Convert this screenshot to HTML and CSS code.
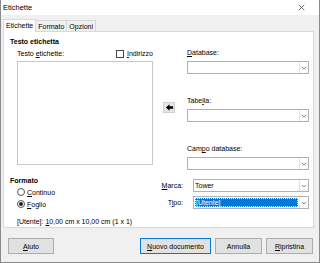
FILE: index.html
```html
<!DOCTYPE html>
<html lang="it">

<head>
    <meta charset="UTF-8">
    <title>Etichette</title>
    <link rel="stylesheet" href="styles.css">
</head>

<body>
    <div class="window">
        <div class="titlebar">
            <span>Etichette</span>
            <svg class="close" viewBox="0 0 10 10">
                <path d="M1,1 L9,9 M9,1 L1,9" stroke="#333" stroke-width="1" fill="none"></path>
            </svg>
        </div>
        <div class="content">
            <div class="tabs">
                <div class="tab tab-selected">Etichette</div>
                <div class="tab">Formato</div>
                <div class="tab">Opzioni</div>
            </div>
            <div class="panel">
                <div class="top">
                    <div class="text-col">
                        <div class="heading">Testo etichetta</div>
                        <div class="label-row">
                            <span>Testo <u>e</u>tichette:</span>
                            <span class="check"><span class="checkbox"></span><u>I</u>ndirizzo</span>
                        </div>
                        <div class="textarea"></div>
                    </div>
                    <div class="arrow-col">
                        <div class="arrow-btn">
                            <svg viewBox="0 0 10 10">
                                <path d="M1,5 L5,1.5 L5,3.7 L9,3.7 L9,6.3 L5,6.3 L5,8.5 Z" fill="#000"></path>
                            </svg>
                        </div>
                    </div>
                    <div class="db-col">
                        <div class="field first">
                            <div class="label"><u>D</u>atabase:</div>
                            <div class="combo"><span class="combo-text"></span><span class="combo-btn"><svg viewBox="0 0 8 8"><path d="M2,3 L4,5 L6,3" stroke="#666" stroke-width="0.8" fill="none"></path></svg></span></div>
                        </div>
                        <div class="field">
                            <div class="label">Tabe<u>l</u>la:</div>
                            <div class="combo"><span class="combo-text"></span><span class="combo-btn"><svg viewBox="0 0 8 8"><path d="M2,3 L4,5 L6,3" stroke="#666" stroke-width="0.8" fill="none"></path></svg></span></div>
                        </div>
                        <div class="field">
                            <div class="label">Cam<u>p</u>o database:</div>
                            <div class="combo"><span class="combo-text"></span><span class="combo-btn"><svg viewBox="0 0 8 8"><path d="M2,3 L4,5 L6,3" stroke="#666" stroke-width="0.8" fill="none"></path></svg></span></div>
                        </div>
                    </div>
                </div>
                <div class="bottom">
                    <div class="format-col">
                        <div class="heading">Formato</div>
                        <div class="radio-row"><span class="radio"></span><u>C</u>ontinuo</div>
                        <div class="radio-row"><span class="radio radio-on"></span><u>F</u>oglio</div>
                        <div class="info">[Utente]: <u>1</u>0,00 cm x 10,00 cm (1 x 1)</div>
                    </div>
                    <div class="brand-col">
                        <div class="brand-row">
                            <span class="brand-label"><u>M</u>arca:</span>
                            <div class="combo"><span class="combo-text">Tower</span><span class="combo-btn"><svg viewBox="0 0 8 8"><path d="M2,3 L4,5 L6,3" stroke="#666" stroke-width="0.8" fill="none"></path></svg></span></div>
                        </div>
                        <div class="brand-row">
                            <span class="brand-label">T<u>i</u>po:</span>
                            <div class="combo combo-focus"><span class="combo-text"><span class="sel">[Utente]</span></span><span class="combo-btn"><svg viewBox="0 0 8 8"><path d="M2,3 L4,5 L6,3" stroke="#666" stroke-width="0.8" fill="none"></path></svg></span></div>
                        </div>
                    </div>
                </div>
            </div>
            <div class="buttons">
                <div class="btn btn-help"><u>A</u>iuto</div>
                <div class="spacer"></div>
                <div class="btn btn-default"><u>N</u>uovo documento</div>
                <div class="btn">Annulla</div>
                <div class="btn"><u>R</u>ipristina</div>
            </div>
        </div>
    </div>
</body>

</html>
```

FILE: styles.css
```css
* {
    box-sizing: border-box;
    font-family: "Liberation Sans", Arial, sans-serif;
}

html,
body {
    width: 320px;
    height: 263px;
    margin: 0;
    padding: 0;
    overflow: hidden;
    background: #f0f0f0;
}

u {
    text-decoration: underline;
    text-underline-offset: 1px;
}

.window {
    width: 320px;
    height: 263px;
    border: 1px solid #8a8a8a;
    border-top: none;
    display: flex;
    flex-direction: column;
    font-size: 7px;
    color: #000;
}

.titlebar {
    height: 15px;
    flex: none;
    background: #fff;
    display: flex;
    align-items: center;
    justify-content: space-between;
    padding: 0 14px 0 2px;
    font-size: 7.5px;
}

.close {
    width: 7px;
    height: 7px;
}

.content {
    flex: 1;
    display: flex;
    flex-direction: column;
    padding: 4px 5px 0 2px;
}

.tabs {
    display: flex;
    height: 12px;
    position: relative;
    z-index: 1;
}

.tab {
    padding: 0 2px;
    line-height: 11px;
    border: 1px solid #d9d9d9;
    border-bottom: none;
    border-left: none;
    background: #f0f0f0;
    margin-top: 1px;
}

.tab:first-child {
    border-left: 1px solid #d9d9d9;
}

.tab-selected {
    background: #fff;
    margin-top: 0;
    height: 13px;
    line-height: 12px;
}

.panel {
    height: 197px;
    background: #fff;
    border: 1px solid #d9d9d9;
    padding: 5px 4px 0 6px;
    display: flex;
    flex-direction: column;
}

.heading {
    font-weight: bold;
    line-height: 10px;
    height: 10px;
}

.top {
    display: flex;
}

.text-col {
    width: 143px;
}

.label-row {
    display: flex;
    justify-content: space-between;
    align-items: center;
    height: 11px;
    margin-top: 1px;
    padding-left: 7px;
}

.check {
    display: flex;
    align-items: center;
}

.checkbox {
    width: 8px;
    height: 8px;
    border: 1px solid #444;
    background: #fff;
    margin-right: 3px;
}

.textarea {
    margin: 2px 0 0 7px;
    width: 136px;
    height: 104px;
    border: 1px solid #c8c8c8;
}

.arrow-col {
    width: 34px;
    padding: 65px 0 0 10px;
}

.arrow-btn {
    width: 12px;
    height: 11px;
    background: #e6e6e6;
    border: 1px solid #d0d0d0;
    display: flex;
    align-items: center;
    justify-content: center;
}

.arrow-btn svg {
    width: 9px;
    height: 9px;
}

.db-col {
    width: 122px;
}

.field {
    margin-top: 22px;
}

.field.first {
    margin-top: 11px;
}

.label {
    line-height: 10px;
    height: 10px;
}

.combo {
    display: flex;
    height: 13px;
    margin-top: 3px;
    border: 1px solid #b0b0b0;
    background: #fff;
}

.combo-text {
    flex: 1;
    padding: 1px 1px;
    line-height: 9px;
}

.combo-btn {
    width: 9px;
    border-left: 1px solid #e3e3e3;
    display: flex;
    align-items: center;
    justify-content: center;
}

.combo-btn svg {
    width: 8px;
    height: 8px;
}

.bottom {
    display: flex;
    margin-top: 6px;
}

.format-col {
    width: 150px;
}

.radio-row {
    display: flex;
    align-items: center;
    height: 12px;
    padding-left: 7px;
}

.radio {
    width: 8px;
    height: 8px;
    border-radius: 50%;
    border: 1px solid #555;
    margin-right: 2px;
    background: #fff;
    display: flex;
    align-items: center;
    justify-content: center;
}

.radio-on::after {
    content: "";
    width: 4px;
    height: 4px;
    border-radius: 50%;
    background: #222;
}

.info {
    padding-left: 7px;
    margin-top: 7px;
    line-height: 10px;
}

.brand-col {
    flex: 1;
    padding-top: 3px;
}

.brand-row {
    display: flex;
    align-items: center;
    margin-bottom: 4px;
}

.brand-row .combo {
    margin-top: 0;
    width: 116px;
}

.brand-label {
    width: 33px;
    text-align: right;
    padding-right: 10px;
}

.combo-focus .combo-text {
    padding: 1px;
}

.sel {
    display: block;
    background: #0078d7;
    color: #fff;
    outline: 1px dotted #fff;
    outline-offset: -1px;
    height: 9px;
    line-height: 9px;
    padding-left: 1px;
}

.buttons {
    display: flex;
    gap: 4px;
    margin-top: 10px;
    padding: 0 1px 0 5px;
}

.spacer {
    flex: 1;
}

.btn {
    height: 16px;
    width: 47px;
    background: #e1e1e1;
    border: 1px solid #adadad;
    display: flex;
    align-items: center;
    justify-content: center;
}

.btn-help {
    width: 46px;
}

.btn-default {
    width: 71px;
    border-color: #0078d7;
}
```
